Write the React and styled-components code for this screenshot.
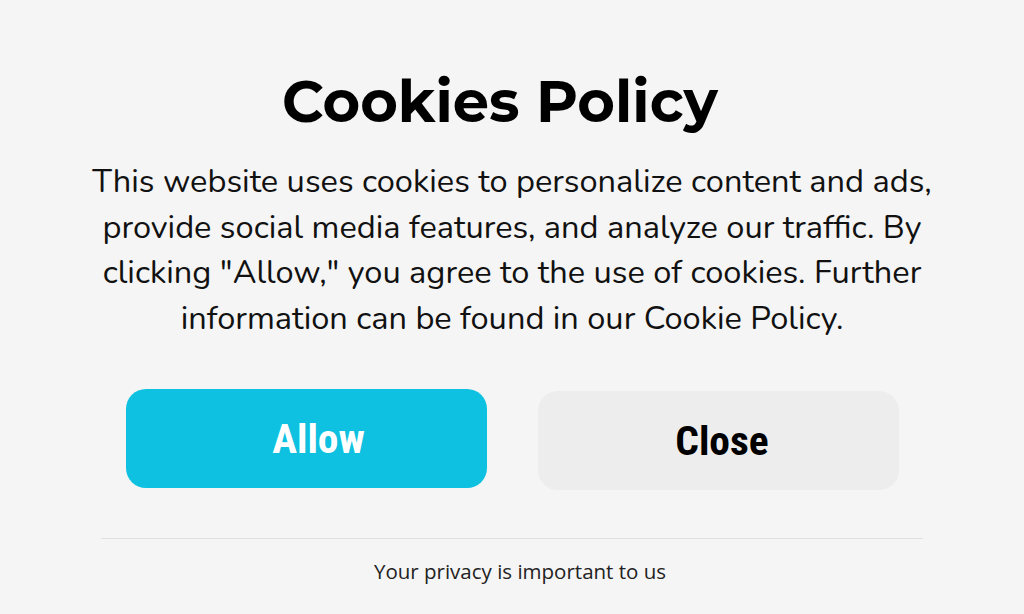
import styled, { createGlobalStyle } from "styled-components";

const GlobalStyle = createGlobalStyle`
  html, body {
    margin: 0;
    padding: 0;
    background: #f5f5f5;
  }
`;

const Page = styled.div`
  width: 1024px;
  height: 614px;
  display: flex;
  justify-content: center;
  background: #f5f5f5;
`;

const Card = styled.div`
  width: 822px;
  display: flex;
  flex-direction: column;
  align-items: center;
  padding-top: 67px;
`;

const Title = styled.h1`
  margin: 0;
  padding-right: 24px;
  font-family: Montserrat, "Lato", "Noto Sans", sans-serif;
  font-weight: 700;
  font-size: 57.5px;
  line-height: 68px;
  color: #000;
`;

const Text = styled.p`
  margin: 24px 0 0;
  width: 880px;
  text-align: center;
  font-family: Nunito, "Lato", "Noto Sans", sans-serif;
  font-size: 32.6px;
  line-height: 45.5px;
  color: #111;
`;

const Actions = styled.div`
  display: flex;
  gap: 51px;
  margin-top: 48px;
`;

const Button = styled.button`
  width: 361px;
  height: 99px;
  border: 0;
  border-radius: 20px;
  padding: 0 0 0 ${(p) => (p.primary ? "25px" : "8px")};
  background: ${(p) => (p.primary ? "#0ec1e0" : "#ededed")};
  color: ${(p) => (p.primary ? "#fff" : "#000")};
  font-family: "Roboto Condensed", "Liberation Sans Narrow", Roboto, sans-serif;
  font-weight: 700;
  font-size: 41.5px;
  cursor: pointer;
  margin-top: ${(p) => (p.primary ? "0" : "2px")};
`;

const Divider = styled.hr`
  width: 100%;
  margin: 48px 0 0;
  border: 0;
  border-top: 1px solid #e0e0e0;
`;

const Note = styled.div`
  margin-top: 18px;
  padding-left: 16px;
  font-family: "Open Sans", sans-serif;
  font-size: 20.5px;
  color: #222;
`;

export default function App() {
  return (
    <>
      <GlobalStyle />
      <Page>
        <Card>
          <Title>Cookies Policy</Title>
          <Text>
            This website uses cookies to personalize content and ads, provide
            social media features, and analyze our traffic. By clicking
            "Allow," you agree to the use of cookies. Further information can
            be found in our Cookie Policy.
          </Text>
          <Actions>
            <Button primary>Allow</Button>
            <Button>Close</Button>
          </Actions>
          <Divider />
          <Note>Your privacy is important to us</Note>
        </Card>
      </Page>
    </>
  );
}
